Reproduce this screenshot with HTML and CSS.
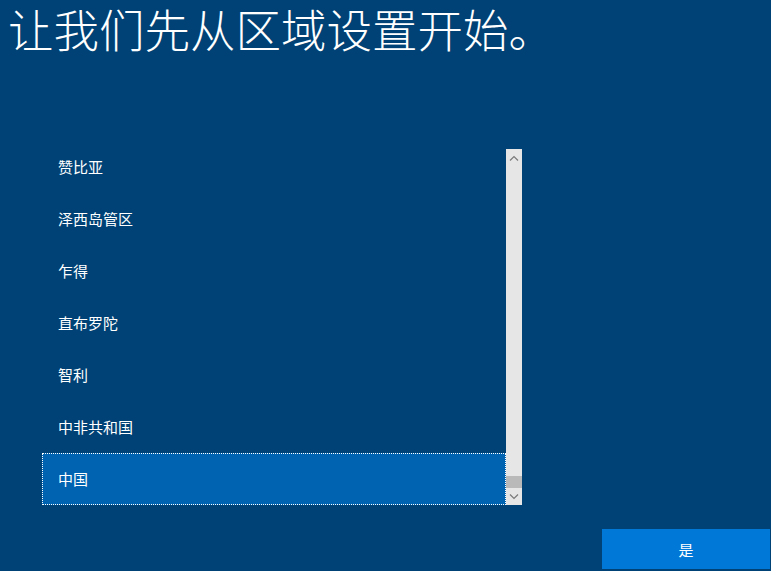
FILE: index.html
```html
<!DOCTYPE html>
<html lang="zh-CN">
<head>
<meta charset="utf-8">
<title>区域设置</title>
<link rel="stylesheet" href="styles.css">
</head>
<body>
<h1 class="title">让我们先从区域设置开始。</h1>
<div class="listbox">
  <ul class="list">
    <li class="item">赞比亚</li>
    <li class="item">泽西岛管区</li>
    <li class="item">乍得</li>
    <li class="item">直布罗陀</li>
    <li class="item">智利</li>
    <li class="item">中非共和国</li>
    <li class="item selected">中国</li>
  </ul>
  <div class="scrollbar">
    <div class="arrow up">
      <svg width="10" height="6" viewBox="0 0 10 6"><path d="M1 5.5 L5 1.5 L9 5.5" fill="none" stroke="#7a7a7a" stroke-width="1.2"/></svg>
    </div>
    <div class="track"><div class="thumb"></div></div>
    <div class="arrow down">
      <svg width="10" height="6" viewBox="0 0 10 6"><path d="M1 0.5 L5 4.5 L9 0.5" fill="none" stroke="#7a7a7a" stroke-width="1.2"/></svg>
    </div>
  </div>
</div>
<div class="footer">
  <button class="primary">是</button>
</div>
</body>
</html>
```
FILE: styles.css
```css
html, body {
  margin: 0;
  padding: 0;
}
body {
  width: 771px;
  height: 571px;
  overflow: hidden;
  background: #004275;
  color: #ffffff;
  font-family: "Noto Sans CJK SC", "Noto Sans", sans-serif;
  display: flex;
  flex-direction: column;
}
.title {
  margin: -5px 0 0 0;
  padding: 0 0 0 8px;
  height: 65px;
  font-size: 45.5px;
  line-height: 66px;
  font-weight: 300;
  letter-spacing: 0;
  white-space: nowrap;
}
.listbox {
  margin: 89px 0 0 42px;
  width: 480px;
  height: 356px;
  display: flex;
  overflow: hidden;
}
.list {
  list-style: none;
  margin: -8px 0 0 0;
  padding: 0;
  flex: 1;
}
.item {
  height: 52px;
  box-sizing: border-box;
  padding-left: 16px;
  padding-bottom: 2px;
  display: flex;
  align-items: center;
  font-size: 15px;
}
.item.selected {
  background: #0063b1;
  border: 1px dotted #ffffff;
  padding-left: 15px;
}
.scrollbar {
  width: 16px;
  background: #e6e6e6;
  display: flex;
  flex-direction: column;
}
.arrow {
  height: 17px;
  display: flex;
  align-items: center;
  justify-content: center;
}
.track {
  flex: 1;
  display: flex;
  flex-direction: column;
  justify-content: flex-end;
}
.thumb {
  height: 12px;
  background: #b9b9b9;
}
.footer {
  display: flex;
  justify-content: flex-end;
  margin-top: 24px;
  padding-right: 1px;
}
.primary {
  width: 168px;
  height: 40px;
  border: none;
  background: #0078d7;
  color: #ffffff;
  font-family: "Noto Sans CJK SC", "Noto Sans", sans-serif;
  font-size: 15px;
  padding: 0;
}
```
